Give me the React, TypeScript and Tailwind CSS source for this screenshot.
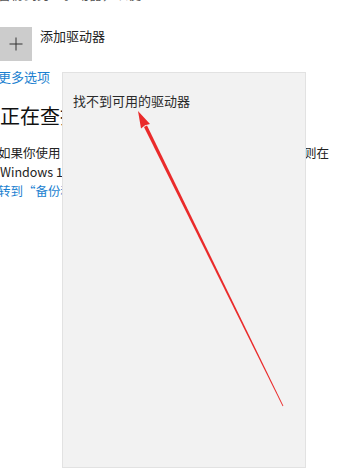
import React from "react";

const font = '"Noto Sans CJK SC", "Noto Sans", sans-serif';

export default function App() {
  const tip = { x: 138, y: 111 };
  const end = { x: 283, y: 406 };
  const dx = end.x - tip.x;
  const dy = end.y - tip.y;
  const len = Math.hypot(dx, dy);
  const ux = dx / len;
  const uy = dy / len;
  const px = -uy;
  const py = ux;
  const headLen = 17;
  const headHalf = 5;
  const bx = tip.x + ux * headLen;
  const by = tip.y + uy * headLen;
  const shaftStartHalf = 1.7;
  const shaftEndHalf = 0.4;
  const head = `${tip.x},${tip.y} ${bx + px * headHalf},${by + py * headHalf} ${bx - ux},${by - uy} ${bx - px * headHalf},${by - py * headHalf}`;
  const shaft = `${bx + px * shaftStartHalf},${by + py * shaftStartHalf} ${end.x + px * shaftEndHalf},${end.y + py * shaftEndHalf} ${end.x - px * shaftEndHalf},${end.y - py * shaftEndHalf} ${bx - px * shaftStartHalf},${by - py * shaftStartHalf}`;

  return (
    <div
      className="relative w-[354px] h-[473px] bg-white overflow-hidden text-[#1f1f1f]"
      style={{ fontFamily: font }}
    >
      <div className="flex flex-col">
        <p className="-mt-[15px] -ml-[2px] text-[13px] leading-[18px] text-[#555] whitespace-nowrap">
          备份到另一驱动器，以便
        </p>
        <div className="mt-[24px] flex items-start gap-[8px]">
          <div className="w-[32px] h-[34px] bg-[#cccccc] flex items-center justify-center">
            <svg width="14" height="14" viewBox="0 0 14 14">
              <line x1="7" y1="0.5" x2="7" y2="13.5" stroke="#333" strokeWidth="1" />
              <line x1="0.5" y1="7" x2="13.5" y2="7" stroke="#333" strokeWidth="1" />
            </svg>
          </div>
          <span className="text-[13px] leading-[18px] text-[#222]">添加驱动器</span>
        </div>
        <a className="mt-[7px] -ml-[2px] text-[13px] leading-[18px] text-[#1b7fd0] whitespace-nowrap">
          更多选项
        </a>
        <h2 className="mt-[16px] text-[20px] leading-[28px] text-[#111] whitespace-nowrap">
          正在查找较旧的备份？
        </h2>
        <p className="mt-[13px] -ml-[2px] text-[12.5px] leading-[19px] text-[#222] whitespace-nowrap">
          如果你使用 Windows 7 的备份和还原工具创建了备份，则在
        </p>
        <p className="text-[12.5px] leading-[19px] text-[#222] whitespace-nowrap">
          Windows 10 中仍可使用该备份。
        </p>
        <a className="-ml-[2px] text-[12.5px] leading-[19px] text-[#1b7fd0] whitespace-nowrap">
          转到“备份和还原”(Windows 7)
        </a>
      </div>

      <div className="absolute left-[62px] top-[72px] w-[244px] h-[396px] bg-[#f2f2f2] border border-[#e2e2e2]">
        <p className="pt-[19px] pl-[10px] text-[13px] leading-[18px] text-[#2a2a2a]">
          找不到可用的驱动器
        </p>
      </div>

      <svg className="absolute left-0 top-0" width="354" height="473" viewBox="0 0 354 473">
        <polygon points={shaft} fill="#ea2b2b" />
        <polygon points={head} fill="#ea2b2b" />
      </svg>
    </div>
  );
}
